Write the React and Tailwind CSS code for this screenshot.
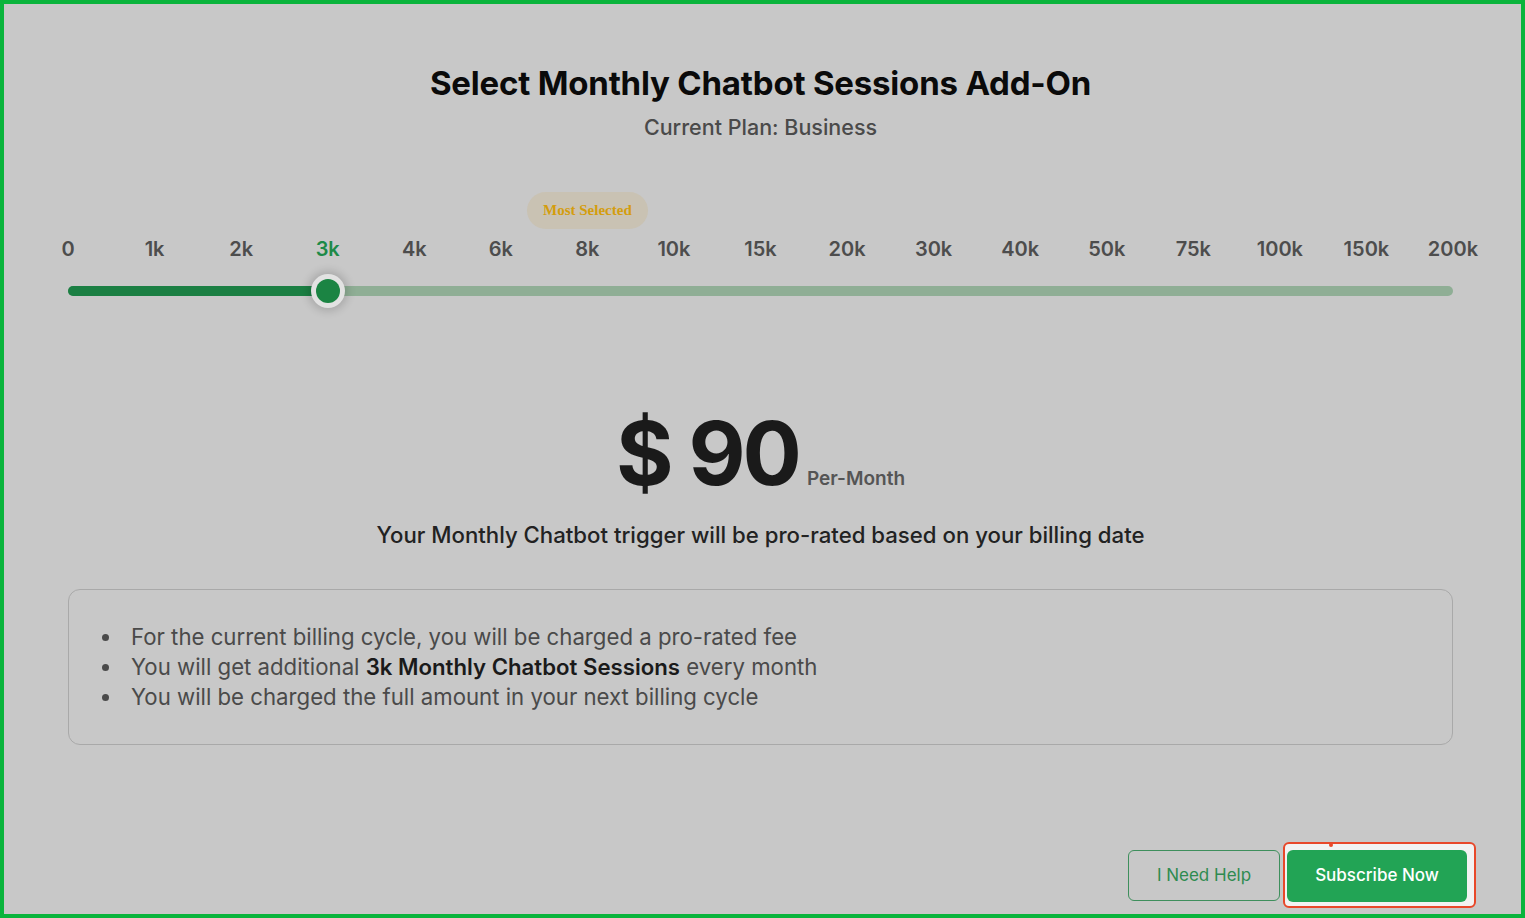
import React from "react";

const labels = ["0","1k","2k","3k","4k","6k","8k","10k","15k","20k","30k","40k","50k","75k","100k","150k","200k"];

export default function App() {
  const sel = 3;
  const pct = (sel / (labels.length - 1)) * 100;
  return (
    <div className="w-[1525px] h-[918px] border-4 border-[#0ab43c] bg-[#c8c8c8] flex flex-col overflow-hidden" style={{ fontFamily: "Inter, 'Noto Sans', sans-serif" }}>
      <div className="flex flex-col pl-[64px] pr-[68px]">
        <h1 className="mt-[59px] text-center text-[33px] leading-[40px] font-bold text-[#0a0a0a] tracking-[-0.2px]">Select Monthly Chatbot Sessions Add-On</h1>
        <p className="mt-[10px] text-center text-[21.5px] leading-[28px] font-medium text-[#4a4a4a]">Current Plan: Business</p>

        <div className="mt-[51px] mx-[-43.28px] grid grid-cols-[repeat(17,minmax(0,1fr))]">
          <div className="col-start-7 col-span-1 flex justify-center h-[37px]">
            <div className="shrink-0 w-[121px] h-[37px] rounded-full bg-[#c9c2b3] flex items-center justify-center text-[15px] font-bold text-[#d49d0e]" style={{ fontFamily: "'Liberation Serif', serif" }}>Most Selected</div>
          </div>
        </div>
        <div className="mt-[6px] mx-[-43.28px] grid grid-cols-[repeat(17,minmax(0,1fr))]">
          {labels.map((l, i) => (
            <div key={l} className={`text-center text-[20px] leading-[28px] font-semibold ${i === sel ? "text-[#1d8a47]" : "text-[#4d4d4d]"}`}>{l}</div>
          ))}
        </div>

        <div className="mt-[23px] relative h-[10px] rounded-full bg-[#8fae95]">
          <div className="absolute left-0 top-0 h-[10px] rounded-full bg-[#1b7f43]" style={{ width: `${pct}%` }} />
          <div className="absolute top-1/2 w-[34px] h-[34px] -translate-x-1/2 -translate-y-1/2 rounded-full bg-[#e2e2e2] shadow-[0_0_8px_3px_rgba(0,0,0,0.16)] flex items-center justify-center" style={{ left: `${pct}%` }}>
            <div className="w-[24px] h-[24px] rounded-full bg-[#1b8443]" />
          </div>
        </div>

        <div className="mt-[113px] flex items-baseline justify-center">
          <span className="text-[88px] leading-none font-bold text-[#1a1a1a] tracking-[-3px]">$ 90</span>
          <span className="ml-[8px] text-[19px] font-semibold text-[#555555]">Per-Month</span>
        </div>

        <p className="mt-[23px] text-center text-[22.2px] leading-[30px] font-medium text-[#222222]">Your Monthly Chatbot trigger will be pro-rated based on your billing date</p>

        <div className="mt-[39px] border border-[#a9a9a9] rounded-[12px] pt-[32px] pb-[32px] pl-[33px]">
          <ul className="flex flex-col text-[22.2px] leading-[30px] text-[#4a4a4a]">
            {[
              <>For the current billing cycle, you will be charged a pro-rated fee</>,
              <>You will get additional <span className="font-semibold text-[#1a1a1a]">3k Monthly Chatbot Sessions</span> every month</>,
              <>You will be charged the full amount in your next billing cycle</>,
            ].map((c, i) => (
              <li key={i} className="flex items-center">
                <span className="w-[7px] h-[7px] rounded-full bg-[#4a4a4a] shrink-0" />
                <span className="ml-[22px]">{c}</span>
              </li>
            ))}
          </ul>
        </div>
      </div>

      <div className="mt-[105px] flex justify-end pr-[54px] gap-[7px]">
        <button className="w-[152px] h-[51px] rounded-[6px] border border-[#3e8f5c] text-[#2e8b50] text-[17px]">I Need Help</button>
        <div className="relative">
          <div className="absolute -left-[4px] -top-[8px] -right-[9px] -bottom-[6px] border-2 border-[#e8482a] rounded-[6px] bg-[#f2f2f2]">
            <div className="absolute left-[44px] -top-[1px] w-[4px] h-[4px] rounded-full bg-[#e8482a]" />
          </div>
          <button className="relative w-[180px] h-[52px] rounded-[6px] bg-[#22a455] text-white text-[17px] font-medium">Subscribe Now</button>
        </div>
      </div>
    </div>
  );
}
